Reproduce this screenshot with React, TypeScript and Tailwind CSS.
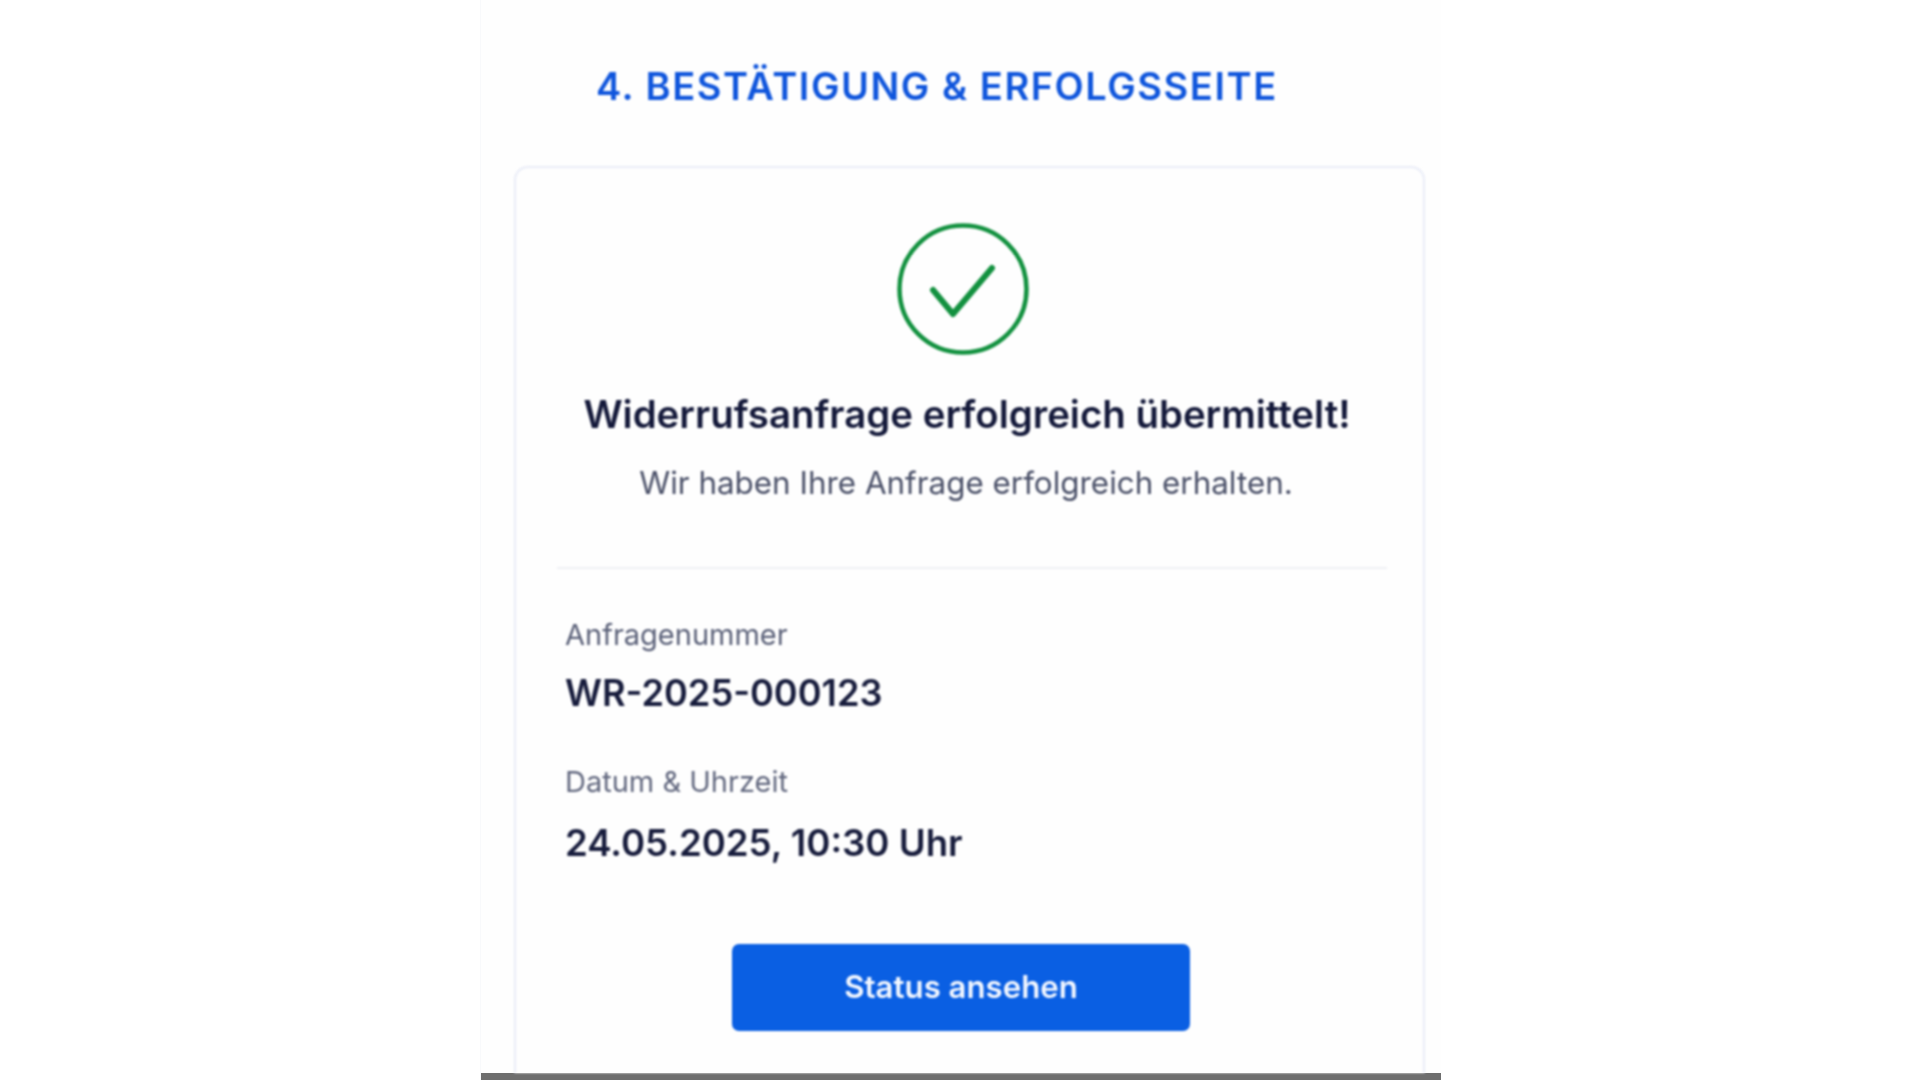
export default function App() {
  return (
    <div className="h-[1080px] w-full overflow-hidden bg-white font-['Inter',sans-serif]">
      <div className="ml-[480px] flex h-[1080px] w-[961px] flex-col border-l border-[#f8f9fb] bg-[#fefefe]">
        <div className="min-h-0 flex-1 overflow-hidden blur-[0.9px]">
          <h1 className="ml-[115px] mt-[62px] h-[48px] text-[38px] font-semibold leading-[48px] tracking-[1.55px] whitespace-nowrap text-[#0f55dc]">
            4. BESTÄTIGUNG &amp; ERFOLGSSEITE
          </h1>
          <div className="ml-[33px] mr-[16px] mt-[56px] h-[960px] rounded-t-[14px] border-2 border-b-0 border-[#e9ecf7] bg-[#fefefe] pl-[41px] pr-[36px] pt-[55px]">
            <div className="flex justify-center pr-[19px]">
              <svg width="132" height="132" viewBox="0 0 132 132" fill="none" className="block">
                <circle cx="66" cy="66" r="63.5" stroke="#12913f" strokeWidth="4.5" />
                <path d="M36 67 L56 91 L95 45" stroke="#12913f" strokeWidth="6" strokeLinecap="round" strokeLinejoin="round" />
              </svg>
            </div>
            <h2 className="mt-[35px] whitespace-nowrap pr-[10px] text-center text-[38.4px] font-semibold leading-[48px] text-[#14193a]">
              Widerrufsanfrage erfolgreich übermittelt!
            </h2>
            <p className="mt-[23px] pr-[12px] whitespace-nowrap text-center text-[31.4px] leading-[44px] text-[#4a5068]">
              Wir haben Ihre Anfrage erfolgreich erhalten.
            </p>
            <div className="mt-[62px] h-[2px] bg-[#eff0f4]" />
            <div className="pl-[8px]">
              <div className="mt-[50px] text-[29px] leading-[32px] text-[#5a6078]">Anfragenummer</div>
              <div className="mt-[20px] text-[36.2px] font-semibold leading-[44px] text-[#171c3c]">WR-2025-000123</div>
              <div className="mt-[51px] text-[29px] leading-[32px] text-[#62687f]">Datum &amp; Uhrzeit</div>
              <div className="mt-[23px] text-[36.6px] font-semibold leading-[44px] text-[#171c3c]">24.05.2025, 10:30 Uhr</div>
            </div>
            <div className="mt-[79px] flex justify-center pr-[22px]">
              <button className="h-[87px] w-[458px] rounded-[7px] bg-[#0a5fe3] text-[31.2px] font-semibold text-[#f4f8ff]">
                Status ansehen
              </button>
            </div>
          </div>
        </div>
        <div className="h-[7px] shrink-0 bg-[#6e6e6e]" />
      </div>
    </div>
  );
}
